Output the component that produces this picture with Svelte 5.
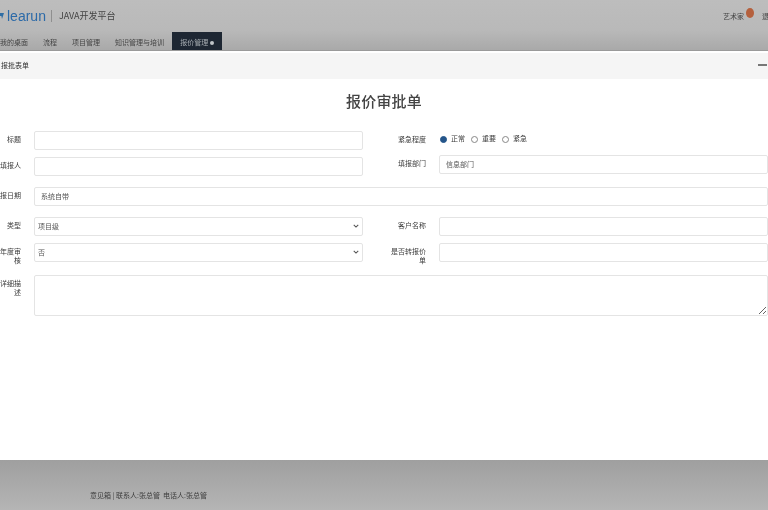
<script lang="ts">
  const tabs = ['我的桌面', '流程', '项目管理', '知识管理与培训']
</script>

<div class="page">
  <header class="topbar">
    <div class="brand-row">
      <svg class="logo" viewBox="0 0 6 8" width="6" height="8"><path d="M0 1h5L3 7 2.4 4H0z" fill="#2f6ea5" /></svg>
      <span class="brand">learun</span>
      <span class="sep"></span>
      <span class="sub">JAVA开发平台</span>
      <span class="user">
        艺术家
        <span class="badge"></span>
        <span class="more">退出</span>
      </span>
    </div>
    <nav class="tabs">
      {#each tabs as t}
        <span class="tab">{t}</span>
      {/each}
      <span class="tab active">报价管理 <i class="dot"></i></span>
    </nav>
  </header>

  <main class="modal">
    <div class="modal-bar">
      <span>报批表单</span>
      <span class="minus"></span>
    </div>
    <h1>报价审批单</h1>
    <form class="form">
      <label class="lbl" for="f1">标题</label>
      <input id="f1" class="ctl" />
      <span class="lbl">紧急程度</span>
      <div class="radios">
        <span class="radio on"></span><span class="opt">正常</span>
        <span class="radio"></span><span class="opt">重要</span>
        <span class="radio"></span><span class="opt">紧急</span>
      </div>

      <label class="lbl" for="f2">填报人</label>
      <input id="f2" class="ctl" />
      <label class="lbl raised" for="f3">填报部门</label>
      <input id="f3" class="ctl raised" value="信息部门" />

      <label class="lbl row-gap" for="f4">填报日期</label>
      <input id="f4" class="ctl wide row-gap" value="系统自带" />

      <label class="lbl row-gap" for="f5">类型</label>
      <div class="select row-gap" id="f5">项目级<svg viewBox="0 0 8 5" width="6" height="4"><path d="M1 1l3 3 3-3" fill="none" stroke="#555" stroke-width="1.4" /></svg></div>
      <label class="lbl row-gap" for="f6">客户名称</label>
      <input id="f6" class="ctl row-gap" />

      <span class="lbl top">是否年度审核</span>
      <div class="select">否<svg viewBox="0 0 8 5" width="6" height="4"><path d="M1 1l3 3 3-3" fill="none" stroke="#555" stroke-width="1.4" /></svg></div>
      <span class="lbl top">是否转报价单</span>
      <input class="ctl" />

      <label class="lbl top note" for="f7">需求详细描述</label>
      <textarea id="f7" class="area"></textarea>
    </form>
  </main>

  <footer class="foot">意见箱 | 联系人:张总管 &nbsp;电话人:张总管</footer>
</div>

<style>
  :global(body) {
    margin: 0;
    overflow: hidden;
    font-family: 'Noto Sans CJK SC', 'Liberation Sans', sans-serif;
  }
  .page {
    width: 768px;
    height: 510px;
    overflow: hidden;
    display: flex;
    flex-direction: column;
    background: #fff;
    filter: blur(0.7px);
  }
  .topbar {
    height: 51px;
    flex: none;
    display: flex;
    flex-direction: column;
    justify-content: space-between;
    background: linear-gradient(#bdbdbd, #b9b9b9 60%, #a9a9a9);
    border-bottom: 1px solid #9a9a9a;
    box-sizing: border-box;
  }
  .brand-row {
    display: flex;
    align-items: center;
    height: 33px;
    margin-top: -1px;
  }
  .logo {
    margin-left: -1px;
    margin-right: 2px;
  }
  .brand {
    font: 400 14px 'Liberation Sans', sans-serif;
    color: #2c6aa8;
  }
  .sep {
    width: 1px;
    height: 12px;
    background: #8f8f8f;
    margin: 0 7px 0 5px;
  }
  .sub {
    font-size: 9px;
    color: #444;
  }
  .user {
    margin-left: auto;
    margin-right: -8px;
    display: flex;
    align-items: center;
    font-size: 7px;
    color: #444;
    gap: 2px;
  }
  .badge {
    width: 8px;
    height: 10px;
    border-radius: 50%;
    background: #b5603d;
    margin: -5px 6px 0 0;
  }
  .tabs {
    display: flex;
    align-items: flex-end;
    height: 18px;
  }
  .tab {
    font-size: 7px;
    color: #444;
    margin-right: 15px;
    height: 18px;
    line-height: 20px;
    white-space: nowrap;
  }
  .tab.active {
    background: #1e2733;
    color: #a8aeb3;
    width: 50px;
    text-align: center;
    margin-left: -7px;
  }
  .dot {
    display: inline-block;
    width: 4px;
    height: 4px;
    border-radius: 50%;
    background: #c0c4c8;
  }
  .modal {
    height: 409px;
    flex: none;
    background: #fff;
  }
  .modal-bar {
    height: 28px;
    display: flex;
    align-items: center;
    justify-content: space-between;
    padding: 0 1px 3px 1px;
    background: #f5f5f5;
    font-size: 7px;
    color: #333;
    box-sizing: border-box;
    border-top: 2px solid #fff;
  }
  .minus {
    width: 9px;
    height: 2px;
    background: #777;
  }
  h1 {
    margin: 13px 0 0;
    height: 24px;
    line-height: 18px;
    text-align: center;
    font-size: 15px;
    font-weight: 500;
    color: #444;
    letter-spacing: 0.2px;
  }
  .form {
    margin: 15px 0 0 -22px;
    display: grid;
    grid-template-columns: 56px 329px 76px 329px;
    row-gap: 7px;
    align-items: center;
  }
  .lbl {
    justify-self: end;
    box-sizing: border-box;
    max-width: 48px;
    padding: 0 13px 2px 0;
    font-size: 7px;
    line-height: 9px;
    color: #3d3d3d;
    text-align: right;
    word-break: break-all;
  }
  .top {
    align-self: start;
    padding: 4px 13px 0 0;
    margin-bottom: -4px;
  }
  .top.note {
    margin-top: 7px;
    padding-top: 3px;
  }
  .row-gap {
    margin-top: 4px;
  }
  .raised {
    margin-top: -2px;
    margin-bottom: 2px;
  }
  .ctl,
  .select,
  .area {
    box-sizing: border-box;
    height: 19px;
    width: 100%;
    border: 1px solid #e4e4e4;
    border-radius: 2px;
    background: #fff;
    font-family: inherit;
    font-size: 7px;
    color: #555;
    padding: 0 6px 2px;
    outline: none;
  }
  .wide {
    grid-column: 2 / 5;
  }
  .select {
    display: flex;
    align-items: center;
    justify-content: space-between;
    padding-right: 3px;
    padding-left: 3px;
  }
  .area {
    grid-column: 2 / 5;
    height: 41px;
    display: block;
    margin-top: 6px;
  }
  .radios {
    display: flex;
    align-items: center;
    height: 19px;
    padding: 0 0 2px 1px;
    box-sizing: border-box;
  }
  .radio {
    box-sizing: border-box;
    width: 7px;
    height: 7px;
    border-radius: 50%;
    border: 1px solid #888;
    background: #fff;
  }
  .radio.on {
    border: 1px solid #24558a;
    background: #24558a;
  }
  .opt {
    font-size: 7px;
    line-height: 9px;
    color: #3d3d3d;
    margin: 0 6px 2px 4px;
    width: 14px;
    white-space: nowrap;
  }
  .foot {
    flex: 1;
    box-sizing: border-box;
    padding: 29px 0 0 90px;
    background: linear-gradient(#9f9f9f, #b5b5b5);
    font-size: 7px;
    line-height: 12px;
    color: #3d3d3d;
    white-space: nowrap;
  }
</style>
